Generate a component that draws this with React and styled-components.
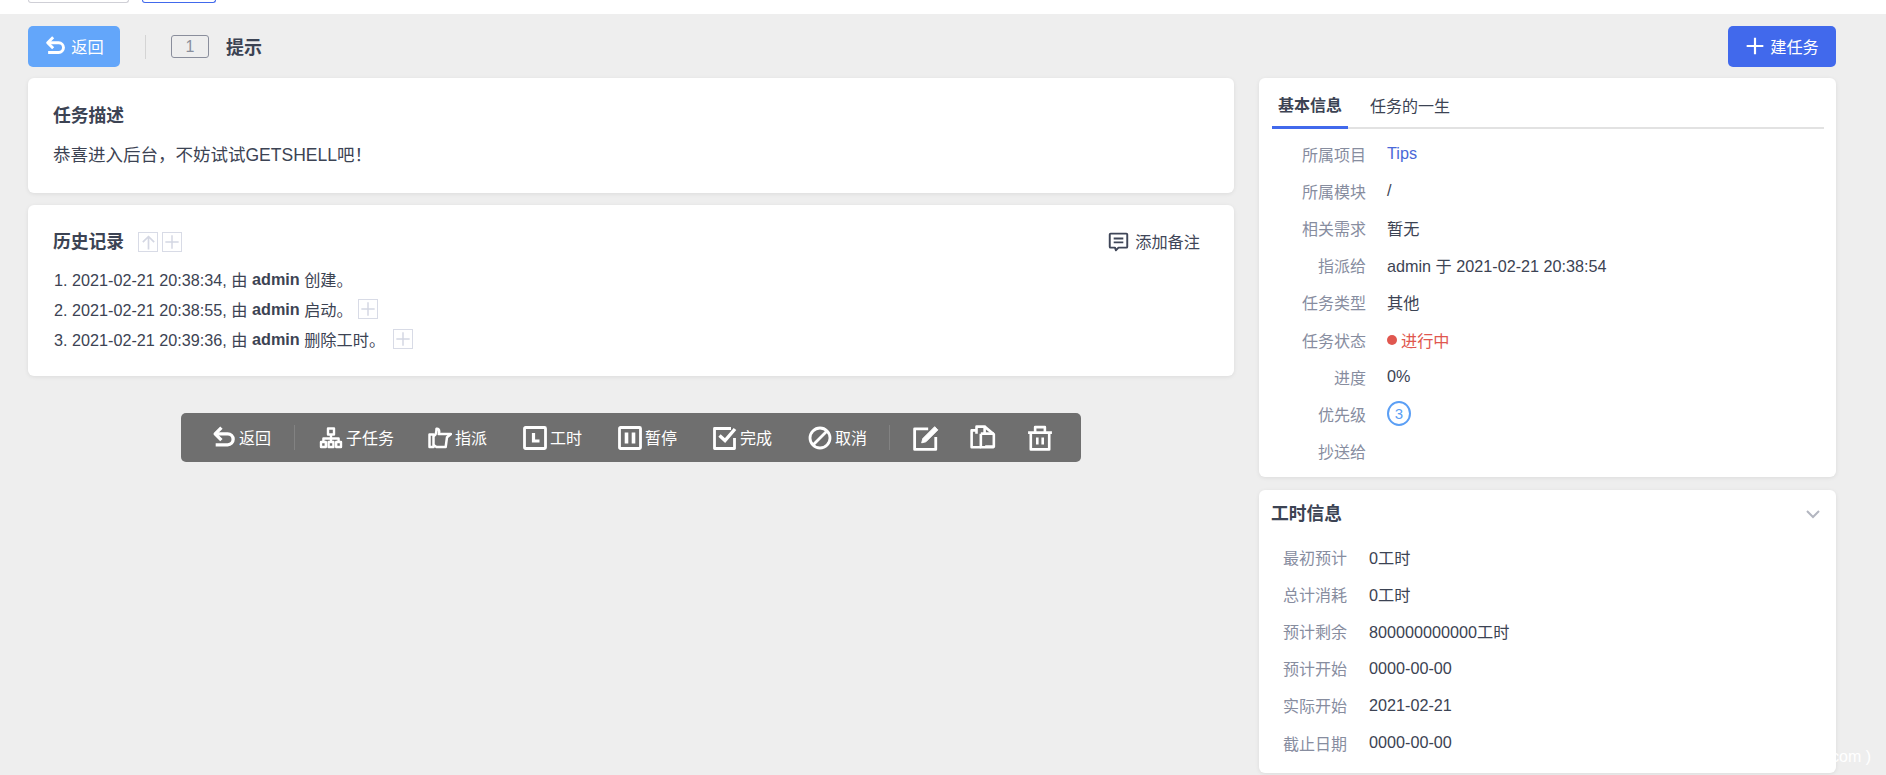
import React from 'react';
import styled, { createGlobalStyle } from 'styled-components';

const GlobalStyle = createGlobalStyle`
  html, body {
    margin: 0;
    height: 100%;
    overflow: hidden;
    background: #eeeeee;
    color: #3c4353;
    font-family: "Liberation Sans", "Noto Sans CJK SC", sans-serif;
    font-size: 16.2px;
  }
  * { box-sizing: border-box; }
`;

const TopStrip = styled.div`
  height: 14px;
  background: #fff;
  display: flex;
  align-items: flex-start;
  padding-left: 28px;
  gap: 13px;
`;

const TopTab = styled.div`
  width: ${(p) => p.$width}px;
  height: 3px;
  border: 1px solid ${(p) => p.$color};
  border-top: 0;
  border-radius: 0 0 3px 3px;
`;

const Main = styled.div`
  padding: 12px 50px 0 28px;
`;

const MainBar = styled.div`
  display: flex;
  align-items: center;
  height: 41px;
  margin-bottom: 11px;
`;

const Button = styled.div`
  display: flex;
  align-items: center;
  justify-content: center;
  gap: ${(p) => p.$gap}px;
  height: 41px;
  padding-bottom: 2px;
  width: ${(p) => p.$width}px;
  border-radius: 5px;
  background: ${(p) => p.$bg};
  color: #fff;
`;

const BarDivider = styled.div`
  width: 1px;
  height: 24px;
  background: #d4d4d4;
  margin: 0 25px;
`;

const IdBadge = styled.div`
  width: 38px;
  height: 23px;
  border: 1px solid #8a8e9c;
  border-radius: 3px;
  color: #8a8e9c;
  font-size: 16px;
  display: flex;
  align-items: center;
  justify-content: center;
  margin-right: 17px;
`;

const PageTitle = styled.div`
  font-size: 18px;
  font-weight: 700;
  flex: 1;
  padding-bottom: 2px;
`;

const Columns = styled.div`
  display: grid;
  grid-template-columns: 1206px 577px;
  gap: 25px;
  align-items: start;
`;

const Column = styled.div`
  display: flex;
  flex-direction: column;
  gap: ${(p) => p.$gap}px;
`;

const Card = styled.section`
  background: #fff;
  border-radius: 6px;
  box-shadow: 0 1px 4px rgba(0, 0, 0, 0.08);
  padding: ${(p) => p.$padding};
  height: ${(p) => p.$height}px;
`;

const CardTitle = styled.h3`
  margin: 0;
  font-size: 17.8px;
  line-height: 26px;
  font-weight: 700;
`;

const Description = styled.div`
  margin-top: 13px;
  font-size: 17.5px;
  line-height: 26px;
`;

const HistoryHead = styled.div`
  display: flex;
  align-items: center;
  height: 26px;
`;

const MiniBox = styled.span`
  width: 20px;
  height: 20px;
  border: 1px solid #d8dbe6;
  color: #d4d7e3;
  display: inline-flex;
  align-items: center;
  justify-content: center;
  margin-left: ${(p) => p.$left || 4}px;
`;

const AddNote = styled.div`
  margin-left: auto;
  margin-right: 34px;
  padding-bottom: 2px;
  display: flex;
  align-items: center;
  gap: 6px;
  color: #3f4658;
`;

const HistoryList = styled.ol`
  margin: 9px 0 0;
  padding: 0;
  list-style: none;
`;

const HistoryItem = styled.li`
  display: flex;
  align-items: center;
  height: 30px;
  padding-left: 1px;
  white-space: pre;

  b {
    font-weight: 700;
  }
`;

const ActionBar = styled.div`
  align-self: center;
  margin-top: 25px;
  width: 900px;
  height: 49px;
  background: #6f6f6f;
  border-radius: 5px;
  display: flex;
  align-items: center;
  padding-left: 30px;
  color: #fff;
`;

const Action = styled.div`
  display: flex;
  align-items: center;
  gap: 3px;
  margin-right: ${(p) => p.$right}px;
`;

const ActionText = styled.span`
  font-size: 16px;
  margin-top: -2px;
`;

const ActionDivider = styled.div`
  width: 1px;
  height: 25px;
  background: #828282;
  margin: 0 ${(p) => p.$right}px 0 ${(p) => p.$left}px;
`;

const Tabs = styled.div`
  display: flex;
  height: 51px;
  margin: 0 12px 0 13px;
  border-bottom: 2px solid #e2e2e2;
`;

const Tab = styled.div`
  height: 51px;
  padding: 3px 6px 0;
  margin-right: 16px;
  display: flex;
  align-items: center;
  font-size: 16px;
  font-weight: ${(p) => (p.$active ? 700 : 400)};
  border-bottom: ${(p) => (p.$active ? '3px solid #4169ec' : '0')};
  color: #3c4353;
`;

const InfoRows = styled.div`
  padding-top: ${(p) => p.$top}px;
`;

const InfoRow = styled.div`
  display: grid;
  grid-template-columns: ${(p) => p.$labelWidth}px 1fr;
  column-gap: ${(p) => p.$gap}px;
  align-items: center;
  height: 37.2px;
`;

const Label = styled.div`
  text-align: right;
  font-size: 16px;
  color: #878d9f;
`;

const Value = styled.div`
  display: flex;
  align-items: center;
  gap: 4px;
  color: ${(p) => p.$color || '#3c4353'};
`;

const StatusDot = styled.span`
  width: 10px;
  height: 10px;
  border-radius: 50%;
  background: #e0574f;
`;

const Priority = styled.span`
  width: 24px;
  height: 25px;
  border: 2px solid #5b9ff5;
  border-radius: 50%;
  color: #5b9ff5;
  font-size: 15px;
  display: flex;
  align-items: center;
  justify-content: center;
`;

const HoursHead = styled.div`
  display: flex;
  align-items: center;
  justify-content: space-between;
  height: 48px;
  padding: 0 15px 0 12px;
`;

const Watermark = styled.div`
  position: absolute;
  right: 15px;
  bottom: 8px;
  color: #fff;
  font-size: 16px;
  line-height: 20px;
`;

const Glyph = ({ size = 24, sw = 2.6, children }) => (
  <svg
    width={size}
    height={size}
    viewBox="0 0 24 24"
    fill="none"
    stroke="currentColor"
    strokeWidth={sw}
    strokeLinejoin="round"
  >
    {children}
  </svg>
);

const UndoIcon = ({ size = 22 }) => (
  <Glyph size={size} sw={3.2}>
    <path d="M10 2.500 4 8.500l6 6" />
    <path d="M4.500 8.500H16a5 5 0 0 1 0 10.500H4.500" />
  </Glyph>
);

const TreeIcon = () => (
  <Glyph sw={2.4}>
    <rect x="9" y="2.500" width="6" height="6" />
    <rect x="2" y="16" width="4.800" height="5" />
    <rect x="9.600" y="16" width="4.800" height="5" />
    <rect x="17.200" y="16" width="4.800" height="5" />
    <path d="M12 8.500V16M4.400 16v-3.500h15.200V16" />
  </Glyph>
);

const HandIcon = () => (
  <Glyph sw={2.5}>
    <rect x="1.500" y="8.500" width="4" height="12.500" />
    <path d="M5.500 10c2.300-.5 3-3 3-7.200 1.800-.4 2.700 1 2.700 2.700 0 1-.2 1.800-.4 2.500H23l-4 3.200-1.300 9.800H8.500L5.500 19" />
  </Glyph>
);

const ClockIcon = () => (
  <Glyph sw={2.8}>
    <rect x="1.500" y="1.500" width="21" height="21" rx="1" />
    <path d="M10.500 7v8h6" strokeWidth="3.200" strokeLinejoin="miter" />
  </Glyph>
);

const PauseIcon = () => (
  <Glyph sw={2.8}>
    <rect x="1.500" y="1.500" width="21" height="21" rx="1" />
    <path d="M8.500 6.500v11M15.500 6.500v11" strokeWidth="3.600" />
  </Glyph>
);

const CheckIcon = () => (
  <Glyph sw={2.8}>
    <path d="M21.500 12v10.500h-20v-20H18" />
    <path d="m6.500 9.500 5.500 5L22 3" strokeWidth="3.400" strokeLinejoin="miter" />
  </Glyph>
);

const BanIcon = () => (
  <Glyph sw={2.8}>
    <circle cx="12" cy="12" r="10" />
    <path d="M5 19 19 5" />
  </Glyph>
);

const EditIcon = () => (
  <Glyph size={26} sw={2.6}>
    <path d="M21 11v11.500H1.500V3.500H14" />
    <path d="m8 16.500 1-4L20 1.500l3 3L12 15.500z" fill="currentColor" strokeWidth="0.800" />
  </Glyph>
);

const CopyIcon = () => (
  <Glyph size={26} sw={2.4}>
    <path d="M10 20.500H1.500V5H6" />
    <path d="M6 8V1.500h7.500V8" />
    <path d="M13.500 1.500 22 8.500V20h-8" />
    <path d="M10 8h12M10 8v12.500h12" />
  </Glyph>
);

const TrashIcon = () => (
  <Glyph size={26} sw={2.4}>
    <path d="M1 7h22M7.500 7V2h9v5M3.500 7v15.500h17V7" />
    <path d="M9.500 11.500v6.500M14.500 11.500v6.500" />
  </Glyph>
);

const NoteIcon = () => (
  <Glyph size={21} sw={2.2}>
    <path d="M3 3h18a1 1 0 0 1 1 1v14a1 1 0 0 1-1 1H12l-3 3-1-3H3a1 1 0 0 1-1-1V4a1 1 0 0 1 1-1z" />
    <path d="M6.500 8.500h11M6.500 13h11" />
  </Glyph>
);

const PlusIcon = ({ size = 16, sw = 2.2 }) => (
  <Glyph size={size} sw={sw}>
    <path d="M12 2v20M2 12h20" />
  </Glyph>
);

const ArrowUpIcon = () => (
  <Glyph size={17} sw={2.4}>
    <path d="M12 22V4M4 11.500 12 3.500l8 8" />
  </Glyph>
);

const ChevronIcon = () => (
  <svg width="16" height="16" viewBox="0 0 16 16" fill="none" stroke="#b3b6c0" strokeWidth="2">
    <path d="m2 5 6 6 6-6" />
  </svg>
);

const actions = [
  { icon: <TreeIcon />, text: '子任务', right: 34 },
  { icon: <HandIcon />, text: '指派', right: 36 },
  { icon: <ClockIcon />, text: '工时', right: 36 },
  { icon: <PauseIcon />, text: '暂停', right: 36 },
  { icon: <CheckIcon />, text: '完成', right: 36 },
  { icon: <BanIcon />, text: '取消', right: 0 },
];

const basicInfo = [
  ['所属项目', <Value $color="#4a68d8">Tips</Value>],
  ['所属模块', <Value>/</Value>],
  ['相关需求', <Value>暂无</Value>],
  ['指派给', <Value>admin 于 2021-02-21 20:38:54</Value>],
  ['任务类型', <Value>其他</Value>],
  ['任务状态', <Value $color="#e0574f"><StatusDot />进行中</Value>],
  ['进度', <Value>0%</Value>],
  ['优先级', <Value><Priority>3</Priority></Value>],
  ['抄送给', <Value />],
];

const hoursInfo = [
  ['最初预计', '0工时'],
  ['总计消耗', '0工时'],
  ['预计剩余', '800000000000工时'],
  ['预计开始', '0000-00-00'],
  ['实际开始', '2021-02-21'],
  ['截止日期', '0000-00-00'],
];

export default function App() {
  return (
    <>
      <GlobalStyle />
      <TopStrip>
        <TopTab $width={101} $color="#cfcfd6" />
        <TopTab $width={74} $color="#4169ec" />
      </TopStrip>
      <Main>
        <MainBar>
          <Button $width={92} $bg="#63a6fa" $gap={5}><UndoIcon />返回</Button>
          <BarDivider />
          <IdBadge>1</IdBadge>
          <PageTitle>提示</PageTitle>
          <Button $width={108} $bg="#4169ec" $gap={5}><PlusIcon size={20} sw={2.6} />建任务</Button>
        </MainBar>
        <Columns>
          <Column $gap={12}>
            <Card $padding="25px 25px 0" $height={115}>
              <CardTitle>任务描述</CardTitle>
              <Description>恭喜进入后台，不妨试试GETSHELL吧！</Description>
            </Card>
            <Card $padding="24px 0 0 25px" $height={171}>
              <HistoryHead>
                <CardTitle>历史记录</CardTitle>
                <MiniBox $left={14}><ArrowUpIcon /></MiniBox>
                <MiniBox><PlusIcon /></MiniBox>
                <AddNote><NoteIcon />添加备注</AddNote>
              </HistoryHead>
              <HistoryList>
                <HistoryItem>1. 2021-02-21 20:38:34, 由 <b>admin</b> 创建。</HistoryItem>
                <HistoryItem>2. 2021-02-21 20:38:55, 由 <b>admin</b> 启动。<MiniBox $left={5}><PlusIcon /></MiniBox></HistoryItem>
                <HistoryItem>3. 2021-02-21 20:39:36, 由 <b>admin</b> 删除工时。<MiniBox $left={8}><PlusIcon /></MiniBox></HistoryItem>
              </HistoryList>
            </Card>
            <ActionBar>
              <Action $right={0}><UndoIcon size={25} /><ActionText>返回</ActionText></Action>
              <ActionDivider $left={23} $right={24} />
              {actions.map((a) => (
                <Action key={a.text} $right={a.right}>{a.icon}<ActionText>{a.text}</ActionText></Action>
              ))}
              <ActionDivider $left={22} $right={23} />
              <Action $right={31}><EditIcon /></Action>
              <Action $right={31}><CopyIcon /></Action>
              <Action $right={0}><TrashIcon /></Action>
            </ActionBar>
          </Column>
          <Column $gap={13}>
            <Card $padding="0" $height={399}>
              <Tabs>
                <Tab $active>基本信息</Tab>
                <Tab>任务的一生</Tab>
              </Tabs>
              <InfoRows $top={6}>
                {basicInfo.map(([label, value]) => (
                  <InfoRow key={label} $labelWidth={107} $gap={21}>
                    <Label>{label}</Label>
                    {value}
                  </InfoRow>
                ))}
              </InfoRows>
            </Card>
            <Card $padding="0" $height={283}>
              <HoursHead>
                <CardTitle>工时信息</CardTitle>
                <ChevronIcon />
              </HoursHead>
              <InfoRows $top={0}>
                {hoursInfo.map(([label, value]) => (
                  <InfoRow key={label} $labelWidth={88} $gap={22}>
                    <Label>{label}</Label>
                    <Value>{value}</Value>
                  </InfoRow>
                ))}
              </InfoRows>
            </Card>
          </Column>
        </Columns>
      </Main>
      <Watermark>com )</Watermark>
    </>
  );
}
